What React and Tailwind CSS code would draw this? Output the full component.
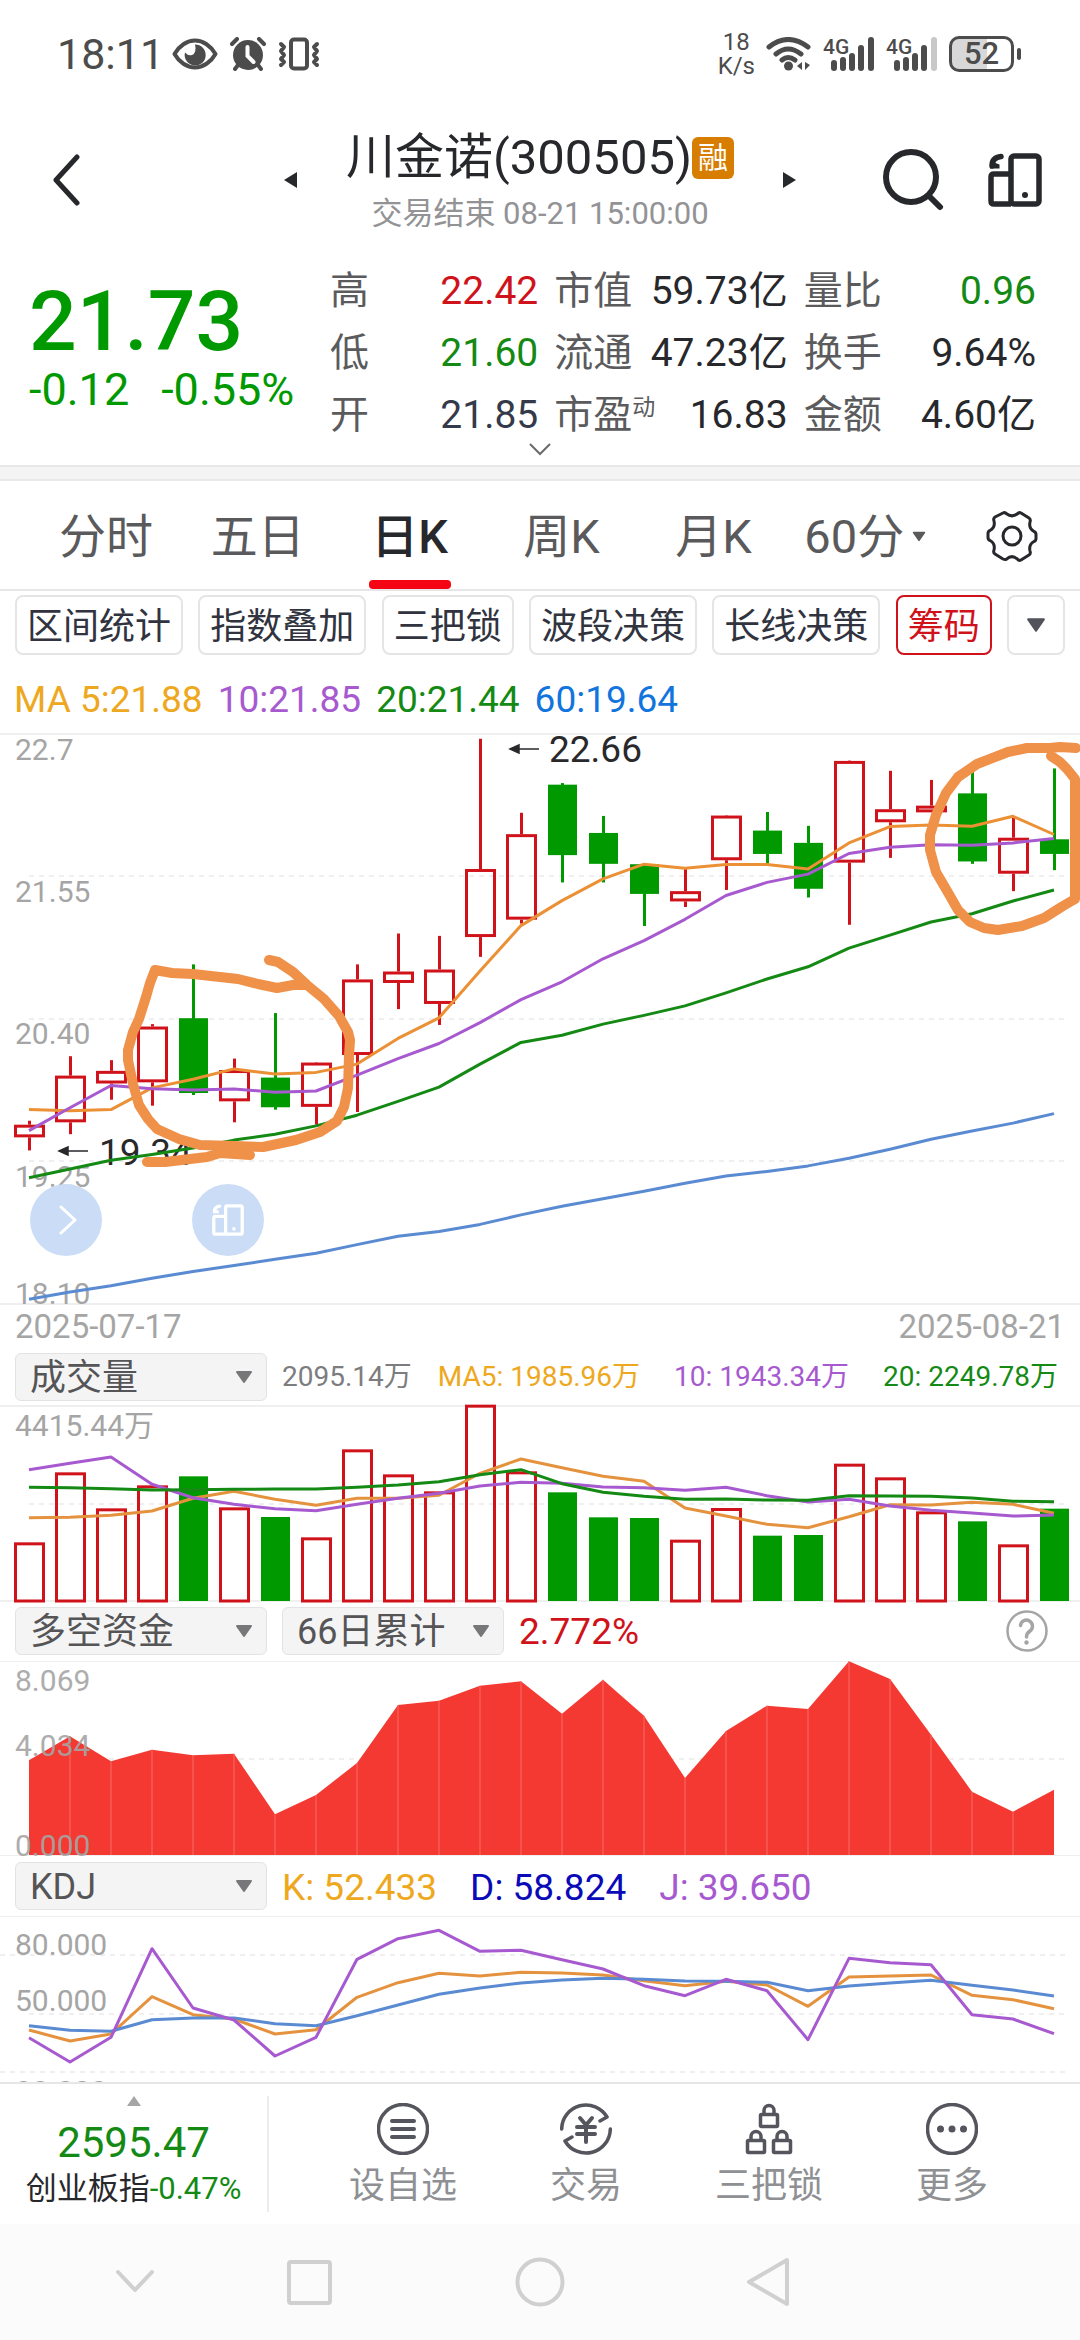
import React from "react";

const COUNT = 26;
const x = (i) => 29 + i * 41;

const RED = "#d0121b";
const GREEN = "#009900";

/* ---------- chart data, in plot units measured downwards ---------- */

// [direction, high, bodyTop, bodyBottom, low]
const CANDLES = [
  ["u", 1013, 1023, 1055, 1088], ["u", 850, 899, 1017, 1047], ["u", 860, 887, 919, 960],
  ["u", 769, 775, 916, 975], ["d", 618, 754, 943, 948], ["u", 856, 885, 964, 1017],
  ["d", 741, 904, 979, 985], ["u", 865, 866, 978, 1023], ["u", 618, 656, 847, 991],
  ["u", 540, 636, 665, 731], ["u", 546, 631, 718, 771], ["u", 48, 377, 549, 599],
  ["u", 235, 289, 505, 515], ["d", 160, 164, 342, 411], ["d", 243, 286, 364, 411],
  ["d", 364, 365, 440, 521], ["u", 373, 433, 459, 473], ["u", 241, 242, 355, 430],
  ["d", 233, 280, 339, 364], ["d", 268, 311, 427, 449], ["u", 103, 104, 361, 518],
  ["u", 129, 226, 259, 349], ["u", 152, 217, 234, 234], ["d", 131, 186, 358, 364],
  ["u", 248, 298, 389, 433], ["d", 123, 302, 339, 380],
];

const PRICE_LINES = [
  { color: "#5a8bd2", v: [1464, 1446, 1430, 1411, 1394, 1379, 1363, 1348, 1326, 1305, 1293, 1275, 1251, 1229, 1210, 1191, 1171, 1153, 1141, 1127, 1108, 1085, 1060, 1039, 1019, 995] },
  { color: "#148a14", v: [1157, 1135, 1113, 1098, 1082, 1062, 1047, 1026, 999, 964, 928, 870, 815, 797, 769, 747, 723, 690, 655, 624, 577, 544, 511, 490, 458, 430] },
  { color: "#eb9034", v: [985, 988, 985, 930, 908, 882, 895, 891, 870, 805, 753, 635, 520, 457, 402, 365, 375, 366, 366, 377, 311, 270, 266, 269, 244, 290] },
  { color: "#a75acf", v: [1038, 980, 924, 932, 935, 933, 941, 938, 898, 856, 818, 765, 707, 662, 604, 558, 504, 444, 411, 390, 338, 322, 316, 317, 311, 300] },
];

const VOLUMES = [637, 427, 535, 466, 439, 532, 561, 622, 358, 433, 484, 224, 424, 487, 562, 564, 629, 534, 617, 615, 401, 442, 544, 574, 643, 536];

const VOLUME_LINES = [
  { color: "#e5923e", v: [563, 562, 556, 543, 505, 484, 508, 526, 505, 505, 496, 430, 387, 413, 439, 454, 534, 558, 583, 593, 560, 524, 525, 517, 523, 550] },
  { color: "#a75acf", v: [419, 400, 381, 463, 503, 523, 536, 542, 523, 505, 490, 468, 457, 460, 471, 473, 481, 472, 497, 516, 508, 528, 541, 549, 558, 555] },
  { color: "#148a14", v: [472, 473, 476, 480, 479, 478, 477, 477, 472, 465, 455, 434, 419, 461, 487, 499, 508, 507, 510, 511, 497, 498, 499, 504, 514, 515] },
];

const FUNDS = [1290, 1218, 1293, 1258, 1275, 1270, 1452, 1394, 1298, 1124, 1111, 1066, 1053, 1150, 1048, 1156, 1343, 1202, 1126, 1136, 993, 1046, 1213, 1384, 1444, 1378];

const KDJ_LINES = [
  { color: "#e5923e", v: [570, 603, 582, 470, 524, 537, 582, 569, 472, 428, 400, 408, 397, 399, 405, 422, 437, 424, 435, 499, 411, 408, 405, 466, 479, 506] },
  { color: "#5a8bd2", v: [557, 571, 574, 539, 534, 534, 551, 557, 527, 495, 463, 444, 429, 420, 415, 418, 423, 424, 427, 452, 438, 429, 421, 436, 450, 468] },
  { color: "#a75acf", v: [593, 666, 592, 326, 504, 540, 648, 592, 358, 296, 271, 334, 331, 359, 387, 437, 467, 418, 452, 599, 355, 368, 374, 524, 537, 581] },
];

const MARK_LEFT = [[269, 226], [278, 228], [293, 238], [307, 251], [324, 265], [339, 282], [348, 298], [350, 306], [349, 322], [348, 354], [344, 373], [337, 387], [320, 398], [296, 406], [263, 413], [234, 412], [200, 411], [179, 405], [157, 395], [148, 385], [139, 371], [133, 350], [128, 326], [128, 316], [133, 298], [139, 285], [146, 263], [150, 249], [155, 236], [172, 239], [193, 240], [238, 245], [258, 250], [277, 254], [293, 251], [307, 251]];
const MARK_LEFT_TAIL = [[147, 428], [165, 428], [207, 423], [220, 419], [250, 421]];
const MARK_RIGHT = [[1076, 14], [1060, 13], [1050, 14], [1027, 14], [1008, 18], [977, 30], [958, 43], [946, 59], [936, 81], [930, 101], [930, 116], [936, 138], [950, 162], [958, 176], [970, 188], [984, 194], [998, 196], [1022, 192], [1044, 184], [1063, 172], [1075, 165], [1075, 45], [1067, 35], [1060, 28], [1051, 22]];

const priceY = (v) => ((v - 36) * 570) / 1440;
const volY = (v) => (v - 228) / 3;
const fundY = (v) => (v - 992) / 3;
const kdjY = (v) => (v - 228) / 3;

const linePoints = (values, y) => values.map((v, i) => `${x(i)},${y(v).toFixed(1)}`).join(" ");
const pts = (list) => list.map((p) => p.join(",")).join(" ");

function Grid({ y, from = 29 }) {
  return <line x1={from} x2="1068" y1={y} y2={y} stroke="#efefef" strokeWidth="2" strokeDasharray="5 5" />;
}

function Edge({ y }) {
  return <line x1="0" x2="1080" y1={y} y2={y} stroke="#efefef" strokeWidth="2" />;
}

function Lines({ lines, y }) {
  return lines.map((l, k) => (
    <polyline key={k} points={linePoints(l.v, y)} fill="none" stroke={l.color} strokeWidth="3" strokeLinejoin="round" />
  ));
}

function Axis({ y, children }) {
  return (
    <text x="15" y={y} fontSize="30" fill="#a5a5a5" dominantBaseline="central">
      {children}
    </text>
  );
}

function Mark({ points }) {
  return <polyline points={pts(points)} fill="none" stroke="#f0914a" strokeWidth="10" strokeLinejoin="round" strokeLinecap="round" />;
}

function PriceChart() {
  return (
    <svg viewBox="0 0 1080 570" className="block h-auto w-full overflow-visible" role="img" aria-label="日K">
      <Edge y={0} />
      <Grid y={142} />
      <Grid y={285} />
      <Grid y={427} />
      <Edge y={570} />
      {CANDLES.map(([dir, hi, top, bottom, lo], i) => {
        const cx = x(i) + 0.5;
        const t = priceY(top);
        const b = priceY(bottom);
        if (dir === "d") {
          return (
            <g key={i} fill={GREEN}>
              <rect x={cx - 1.5} y={priceY(hi)} width="3" height={priceY(lo) - priceY(hi)} />
              <rect x={cx - 14.5} y={t} width="29" height={b - t} />
            </g>
          );
        }
        return (
          <g key={i} fill="none" stroke={RED} strokeWidth="3">
            <line x1={cx} x2={cx} y1={priceY(hi)} y2={t} />
            <line x1={cx} x2={cx} y1={b} y2={priceY(lo)} />
            <rect x={cx - 14} y={t + 1.5} width="28" height={b - t - 3} />
          </g>
        );
      })}
      <g fontSize="37" fill="#29292c">
        <text x="99" y="418" dominantBaseline="central">19.34</text>
        <text x="549" y="15" dominantBaseline="central">22.66</text>
      </g>
      <g fill="#29292c" stroke="#29292c" strokeWidth="1.5">
        <path d="M60 417H88M59 417l9-4v8z" />
        <path d="M511 15H539M510 15l9-4v8z" />
      </g>
      <Axis y={15}>22.7</Axis>
      <Axis y={157}>21.55</Axis>
      <Axis y={299}>20.40</Axis>
      <Axis y={442}>19.25</Axis>
      <Axis y={559}>18.10</Axis>
      <Lines lines={PRICE_LINES} y={priceY} />
      <Mark points={MARK_LEFT} />
      <Mark points={MARK_LEFT_TAIL} />
      <Mark points={MARK_RIGHT} />
    </svg>
  );
}

function VolumeChart() {
  return (
    <svg viewBox="0 0 1080 195" className="block h-auto w-full overflow-visible" role="img" aria-label="成交量">
      <Edge y={0} />
      <Grid y={98} />
      <Edge y={195} />
      <Axis y={19}>4415.44万</Axis>
      {VOLUMES.map((v, i) => {
        const cx = x(i) + 0.5;
        const t = volY(v);
        return CANDLES[i][0] === "d" ? (
          <rect key={i} x={cx - 14.5} y={t} width="29" height={195 - t} fill={GREEN} />
        ) : (
          <rect key={i} x={cx - 14} y={t + 1.5} width="28" height={193.5 - t} fill="none" stroke={RED} strokeWidth="3" />
        );
      })}
      <Lines lines={VOLUME_LINES} y={volY} />
    </svg>
  );
}

function FundsChart() {
  return (
    <svg viewBox="0 0 1080 195" className="block h-auto w-full" role="img" aria-label="多空资金">
      <Edge y={0} />
      <Grid y={98} />
      <polygon points={`${x(0)},195 ${linePoints(FUNDS, fundY)} ${x(COUNT - 1)},195`} fill="#f43832" />
      {FUNDS.slice(1, -1).map((v, i) => (
        <line key={i} x1={x(i + 1)} x2={x(i + 1)} y1={fundY(v)} y2="195" stroke="#f86a64" strokeWidth="1" />
      ))}
      <Edge y={195} />
      <g opacity="0.9">
        <Axis y={19}>8.069</Axis>
        <Axis y={84}>4.034</Axis>
        <Axis y={184}>0.000</Axis>
      </g>
    </svg>
  );
}

function KdjChart() {
  return (
    <svg viewBox="0 0 1080 166" className="block h-auto w-full overflow-hidden" role="img" aria-label="KDJ">
      <Edge y={0} />
      <Grid y={39} from={0} />
      <Grid y={98} from={29} />
      <Grid y={156} from={0} />
      <Axis y={28}>80.000</Axis>
      <Axis y={84}>50.000</Axis>
      <Axis y={175}>20.000</Axis>
      <Lines lines={KDJ_LINES} y={kdjY} />
    </svg>
  );
}

/* ---------- icons ---------- */

function RotateIcon({ className }) {
  return (
    <svg viewBox="0 0 54 54" className={className} fill="none" stroke="currentColor" strokeWidth="5.500" strokeLinejoin="round" aria-hidden="true">
      <rect x="23" y="3" width="28" height="48" rx="3" />
      <path d="M23 21H6q-3 0-3 3v24q0 3 3 3h17" />
      <path d="M4 13q0-8.500 9-9.500" strokeLinecap="round" />
      <path d="M2 8v7.500h9.500v-4z" fill="currentColor" stroke="none" />
      <circle cx="37" cy="42" r="3" fill="currentColor" stroke="none" />
    </svg>
  );
}

function Triangle({ className }) {
  return (
    <svg viewBox="0 0 18 14" className={className} fill="currentColor" stroke="currentColor" strokeWidth="2" strokeLinejoin="round" aria-hidden="true">
      <path d="M2 2h14L9 12z" />
    </svg>
  );
}

function Signal({ weak }) {
  return (
    <svg viewBox="0 0 52 36" className="h-9 w-[52px] overflow-visible" fill="#4c4c4c" aria-hidden="true">
      <text x="0" y="18" fontSize="21" fontWeight="500">4G</text>
      <rect x="8" y="24" width="6" height="11" rx="3" />
      <rect x="17" y="21" width="6" height="14" rx="3" />
      <rect x="26" y="17" width="6" height="18" rx="3" />
      <rect x="35" y="9" width="6" height="26" rx="3" />
      <rect x="45" y="1" width="6" height="34" rx="3" fill={weak ? "#c8c8c8" : "#4c4c4c"} />
    </svg>
  );
}

function StatusBar() {
  return (
    <div className="flex h-[108px] items-center justify-between pr-[59px] pl-[57px] text-[#4c4c4c]">
      <div className="flex items-center gap-[12px]">
        <span className="-mr-1 text-[43px] leading-none">18:11</span>
        <svg viewBox="0 0 46 32" className="h-8 w-[46px]" fill="none" stroke="#4c4c4c" strokeWidth="4" aria-hidden="true">
          <path d="M2.500 16C7 8 15 2.500 23 2.500S39 8 43.500 16C39 24 31 29.500 23 29.500S7 24 2.500 16z" strokeLinejoin="round" />
          <path d="M23 6.500a10.500 10.500 0 1 1-10 8q3 3.500 7 2.500 5-2 3-10.500z" fill="#4c4c4c" stroke="none" />
        </svg>
        <svg viewBox="0 0 36 34" className="h-[34px] w-9" fill="none" stroke="#4c4c4c" strokeWidth="4" strokeLinecap="round" aria-hidden="true">
          <circle cx="18" cy="18" r="15" fill="#4c4c4c" stroke="none" />
          <path d="M2 7l5-5M34 7l-5-5M8 28l-3 4M28 28l3 4" />
          <path d="M17.500 10v9l6 6" stroke="#fff" />
        </svg>
        <svg viewBox="0 0 42 34" className="h-[34px] w-[42px]" fill="none" stroke="#4c4c4c" strokeWidth="4" strokeLinecap="round" strokeLinejoin="round" aria-hidden="true">
          <rect x="13" y="2.500" width="16" height="29" rx="3" />
          <path d="M3 7l3 3-3 4 3 4-3 4 3 3-3 3M39 7l-3 3 3 4-3 4 3 4-3 3 3 3" />
        </svg>
      </div>
      <div className="flex items-center gap-[11px]">
        <div className="text-center text-[24px] leading-[24px]">
          <div>18</div>
          <div>K/s</div>
        </div>
        <svg viewBox="0 0 46 34" className="h-[34px] w-[46px]" fill="none" stroke="#4c4c4c" strokeWidth="5" strokeLinecap="round" aria-hidden="true">
          <path d="M3 10Q22-5 42 10M10 17Q22 7 35 17M16 23Q22 18 29 23" />
          <circle cx="22.500" cy="29" r="4.500" fill="#4c4c4c" stroke="none" />
          <path d="M36 25v8l-5-4zM39 25v8l5-5z" fill="#4c4c4c" stroke="none" />
        </svg>
        <Signal />
        <Signal weak />
        <div className="flex items-center gap-[3px]">
          <div className="flex h-[36px] w-[65px] items-center justify-center rounded-[10px] border-[3px] border-[#4c4c4c] bg-linear-to-r from-[#d8d8d8] from-60% to-white to-60% text-[31px] leading-[30px] font-medium">
            52
          </div>
          <div className="h-3 w-1 rounded-full bg-[#4c4c4c]" />
        </div>
      </div>
    </div>
  );
}

function Header() {
  return (
    <header className="grid h-[144px] grid-cols-[1fr_512px_1fr] items-center text-[#27282b]">
      <button aria-label="返回" className="w-[80px] pl-[52px]">
        <svg viewBox="0 0 28 52" className="h-[52px] w-7" fill="none" stroke="currentColor" strokeWidth="5" strokeLinecap="round" strokeLinejoin="round">
          <path d="M25 3L4 26l21 23" />
        </svg>
      </button>
      <div className="flex items-center justify-between">
        <button aria-label="上一只">
          <svg viewBox="0 0 14 16" className="h-4 w-[14px]" fill="currentColor"><path d="M0 8L13 0v16z" /></svg>
        </button>
        <div className="pt-1 text-center">
          <h1 className="flex h-[60px] items-center text-[49px] leading-[60px] whitespace-nowrap">
            <span>川金诺(300505)</span>
            <span className="flex size-[42px] items-center justify-center rounded-md bg-[#d67d02] text-[30px] leading-none text-white">融</span>
          </h1>
          <p className="mt-1 text-[31px] leading-[44px] whitespace-nowrap text-[#939396]">交易结束 08-21 15:00:00</p>
        </div>
        <button aria-label="下一只">
          <svg viewBox="0 0 14 16" className="h-4 w-[14px]" fill="currentColor"><path d="M14 8L1 0v16z" /></svg>
        </button>
      </div>
      <div className="flex items-center justify-end gap-[44px] pr-[38px]">
        <button aria-label="搜索">
          <svg viewBox="0 0 62 62" className="size-[62px]" fill="none" stroke="currentColor" strokeWidth="6" strokeLinecap="round">
            <circle cx="29" cy="28" r="25" />
            <path d="M47 47l11 11" />
          </svg>
        </button>
        <button aria-label="横屏"><RotateIcon className="size-[54px]" /></button>
      </div>
    </header>
  );
}

const STATS = [
  ["高", "22.42", "text-[#d0121b]"], ["市值", "59.73亿", "text-[#27282b]"], ["量比", "0.96", "text-[#148a14]"],
  ["低", "21.60", "text-[#148a14]"], ["流通", "47.23亿", "text-[#27282b]"], ["换手", "9.64%", "text-[#27282b]"],
  ["开", "21.85", "text-[#343a4a]"], ["市盈", "16.83", "text-[#27282b]", "动"], ["金额", "4.60亿", "text-[#27282b]"],
];

function Quote() {
  return (
    <section className="h-[213px] pt-[8px]">
      <div className="flex pr-[44px] pl-[29px]">
        <div className="w-[301px] shrink-0 pt-5 text-[#009900]">
          <div className="text-[84px] leading-[84px] font-medium">21.73</div>
          <div className="flex gap-[32px] text-[45px] leading-[52px]">
            <span>-0.12</span>
            <span>-0.55%</span>
          </div>
        </div>
        <dl className="grid flex-1 grid-cols-[208fr_233fr_232fr] gap-x-[16px]">
          {STATS.map(([label, value, color, sup]) => (
            <div key={label} className="flex h-[62px] items-center justify-between text-[39px] leading-none whitespace-nowrap">
              <dt className="flex items-start text-[#5b5b5d]">
                {label}
                {sup && <span className="text-[23px] leading-none">{sup}</span>}
              </dt>
              <dd className={color}>{value}</dd>
            </div>
          ))}
        </dl>
      </div>
      <button aria-label="展开" className="mx-auto -mt-1 block w-6">
        <svg viewBox="0 0 24 14" className="h-[14px] w-6" fill="none" stroke="#6b6b6e" strokeWidth="2"><path d="M2 2l10 10L22 2" /></svg>
      </button>
    </section>
  );
}

const TABS = ["分时", "五日", "日K", "周K", "月K"];

function PeriodTabs() {
  return (
    <nav className="grid h-[110px] grid-cols-[repeat(6,151fr)_136fr] border-b-2 border-[#e6e6e8] pr-[2px] pl-[30px] text-[47px] text-[#5a5a5c]">
      {TABS.map((t) => (
        <button key={t} className={t === "日K" ? "flex flex-col items-center justify-between font-medium text-[#27282b]" : "flex flex-col items-center justify-between"}>
          <span className="flex h-[99px] items-center pt-[12px] leading-none">{t}</span>
          {t === "日K" && <span className="h-[9px] w-[82px] shrink-0 rounded bg-[#f50514]" />}
        </button>
      ))}
      <button className="flex h-[99px] items-center justify-center gap-2 pt-[12px] leading-none whitespace-nowrap">
        60分
        <Triangle className="h-[11px] w-[14px] shrink-0" />
      </button>
      <button aria-label="设置" className="flex h-[102px] items-center justify-end pt-2 pr-[40px]">
        <svg viewBox="0 0 52 52" className="size-[52px]" fill="none" stroke="#27282b" strokeWidth="3" strokeLinejoin="round">
          <path d="M17 3q2-1 3.500.8Q26 8 31.500 3.800 33 2 35 3l8 5q2 1.500 1 4-1.500 6.500 4 9.500 2 .8 2 3v4q0 2.200-2 3-5.500 3-4 9.500 1 2.500-1 4l-8 5q-2 1-3.500-.8Q26 44 20.500 49.200 19 50 17 49l-8-5q-2-1.500-1-4 1.500-6.500-4-9.500-2-.8-2-3v-4q0-2.200 2-3 5.500-3 4-9.500-1-2.500 1-4z" />
          <circle cx="26" cy="26" r="9" />
        </svg>
      </button>
    </nav>
  );
}

const CHIPS = ["区间统计", "指数叠加", "三把锁", "波段决策", "长线决策"];

function Chips() {
  return (
    <div className="flex justify-between px-[15px] pt-1 text-[36px] leading-none whitespace-nowrap text-[#31343f]">
      {CHIPS.map((c) => (
        <button key={c} className="h-[60px] rounded-lg border-2 border-[#e5e5e7] px-[10px] pt-1">{c}</button>
      ))}
      <button className="h-[60px] rounded-lg border-2 border-[#d0121b] px-[10px] pt-1 text-[#d0121b]">筹码</button>
      <button aria-label="更多指标" className="flex h-[60px] w-[58px] items-center justify-center rounded-lg border-2 border-[#e5e5e7] text-[#52535a]">
        <Triangle className="h-4 w-5" />
      </button>
    </div>
  );
}

function Picker({ label, options, narrow }) {
  return (
    <label className={narrow ? "relative h-[48px] w-[222px] shrink-0" : "relative h-[48px] w-[252px] shrink-0"}>
      <span className="sr-only">{label}</span>
      <select className="h-full w-full appearance-none overflow-visible rounded-md border border-[#e3e3e3] bg-[#f4f4f4] pt-[2px] pl-[14px] text-[36px] leading-[44px] text-[#555557]">
        {options.map((o) => <option key={o}>{o}</option>)}
      </select>
      <Triangle className="pointer-events-none absolute top-[17px] right-[14px] h-[14px] w-[18px] text-[#77777a]" />
    </label>
  );
}

function FloatingButtons() {
  return (
    <div className="absolute top-[450px] left-[30px] flex gap-[90px] text-white">
      <button aria-label="下一页" className="flex size-[72px] items-center justify-center rounded-full bg-[#cbddf6]">
        <svg viewBox="0 0 20 30" className="ml-1 h-[30px] w-5" fill="none" stroke="currentColor" strokeWidth="3" strokeLinecap="round" strokeLinejoin="round"><path d="M3 2l14 13L3 28" /></svg>
      </button>
      <button aria-label="横屏查看" className="flex size-[72px] items-center justify-center rounded-full bg-[#cbddf6]">
        <RotateIcon className="size-8" />
      </button>
    </div>
  );
}

function Lock({ x: lx, y: ly }) {
  return (
    <g transform={`translate(${lx} ${ly})`}>
      <path d="M5 10V6.500a5 5 0 0 1 10 0V10" />
      <rect x="1.500" y="10.500" width="17" height="12" rx="1" />
    </g>
  );
}

const ACTIONS = [
  {
    label: "设自选",
    icon: <><circle cx="26" cy="26" r="24.500" /><path d="M15 18h22M15 26h22M15 34h22" strokeWidth="4" /></>,
  },
  {
    label: "交易",
    icon: (
      <>
        <path d="M1.700 26A24.300 24.300 0 0 1 47 14l-7 4M50.300 26A24.300 24.300 0 0 1 5 38l7-4" />
        <path d="M20 15l6 7 6-7M17 24h18M17 31h18M26 22v17" strokeWidth="4" />
      </>
    ),
  },
  {
    label: "三把锁",
    icon: <><Lock x="16" y="1" /><Lock x="3" y="27" /><Lock x="29" y="27" /></>,
  },
  {
    label: "更多",
    icon: (
      <>
        <circle cx="26" cy="26" r="24.500" />
        <g fill="#54555d" stroke="none"><circle cx="14.500" cy="26" r="3.500" /><circle cx="26" cy="26" r="3.500" /><circle cx="37.500" cy="26" r="3.500" /></g>
      </>
    ),
  },
];

function BottomBar() {
  return (
    <footer className="flex h-[142px] border-t-2 border-[#e6e6e8] bg-white">
      <button className="my-[12px] flex w-[269px] shrink-0 flex-col items-center border-r-2 border-[#ececee] whitespace-nowrap">
        <svg viewBox="0 0 14 10" className="h-[10px] w-[14px]" fill="#a6a6a8" aria-hidden="true"><path d="M7 0l7 10H0z" /></svg>
        <span className="mt-[13px] text-[42px] leading-[48px] text-[#148a14]">2595.47</span>
        <span className="mt-[2px] text-[31px] leading-[40px] text-[#27282b]">创业板指<span className="text-[#148a14]">-0.47%</span></span>
      </button>
      <div className="flex flex-1 justify-between pr-[92px] pl-[80px] text-[#8f9094]">
        {ACTIONS.map((a) => (
          <button key={a.label} className="flex flex-col items-center pt-[19px]">
            <svg viewBox="0 0 52 52" className="size-[52px]" fill="none" stroke="#54555d" strokeWidth="3.500" strokeLinecap="round" strokeLinejoin="round" aria-hidden="true">{a.icon}</svg>
            <span className="mt-[9px] text-[36px] leading-[44px]">{a.label}</span>
          </button>
        ))}
      </div>
    </footer>
  );
}

function SystemNav() {
  return (
    <div className="grid h-[116px] grid-cols-[135fr_174fr_231fr_229fr_311fr] items-center bg-[#fbfbfb]">
      {[
        ["收起", <path d="M9 16l17 18 17-18" />],
        ["最近任务", <rect x="6" y="6" width="41" height="41" rx="2" />],
        ["主屏幕", <circle cx="26" cy="26" r="22.500" />],
        ["返回", <path d="M44 4v44L6 26z" />],
      ].map(([name, shape]) => (
        <button key={name} aria-label={name} className="-mr-[26px] justify-self-end">
          <svg viewBox="0 0 52 52" className="size-[52px]" fill="none" stroke="#d0d0d0" strokeWidth="4" strokeLinejoin="round" strokeLinecap="round">{shape}</svg>
        </button>
      ))}
    </div>
  );
}

export default function App() {
  return (
    <main className="min-h-screen w-full overflow-hidden bg-white font-['Roboto','Noto_Sans_CJK_SC',sans-serif]">
      <StatusBar />
      <Header />
      <Quote />
      <div className="h-[16px] border-y-2 border-[#e8e8e8] bg-[#f4f4f4]" />
      <PeriodTabs />
      <Chips />
      <div className="mt-[14px] mb-[5px] flex h-[60px] items-center gap-[15px] px-[14px] text-[37px] leading-none">
        <span className="text-[#eea820]">MA 5:21.88</span>
        <span className="text-[#a75acf]">10:21.85</span>
        <span className="text-[#148a14]">20:21.44</span>
        <span className="text-[#1274dd]">60:19.64</span>
      </div>
      <div className="relative">
        <PriceChart />
        <FloatingButtons />
      </div>
      <div className="flex h-[44px] items-center justify-between px-[15px] text-[33px] leading-none text-[#a5a5a5]">
        <span>2025-07-17</span>
        <span>2025-08-21</span>
      </div>
      <div className="flex h-[58px] items-center px-[15px] text-[28px] leading-none whitespace-nowrap">
        <Picker label="副图指标一" options={["成交量"]} />
        <div className="ml-[15px] flex flex-1 gap-[34px]">
          <span className="-mr-2 text-[#7d7d80]">2095.14万</span>
          <span className="text-[#eea820]">MA5: 1985.96万</span>
          <span className="text-[#a75acf]">10: 1943.34万</span>
          <span className="text-[#148a14]">20: 2249.78万</span>
        </div>
      </div>
      <VolumeChart />
      <div className="flex h-[60px] items-center gap-[15px] px-[15px] text-[37px] leading-none">
        <Picker label="副图指标二" options={["多空资金"]} />
        <Picker label="累计周期" options={["66日累计"]} narrow />
        <span className="text-[#d0121b]">2.772%</span>
        <button aria-label="帮助" className="mr-[17px] ml-auto">
          <svg viewBox="0 0 42 42" className="size-[42px]" fill="none" stroke="#a5a5a7" strokeWidth="2.500" strokeLinecap="round">
            <circle cx="21" cy="21" r="19.500" />
            <path d="M14.500 15.500a6 6 0 1 1 9.500 5.500q-3.500 2.500-3.500 6" strokeWidth="3.500" />
            <circle cx="20.500" cy="32.500" r="2.200" fill="#a5a5a7" stroke="none" />
          </svg>
        </button>
      </div>
      <FundsChart />
      <div className="flex h-[60px] items-center px-[15px] text-[37px] leading-none">
        <Picker label="副图指标三" options={["KDJ"]} />
        <div className="ml-[15px] flex gap-[33px] pt-[2px]">
          <span className="text-[#eea820]">K: 52.433</span>
          <span className="text-[#0a0ab8]">D: 58.824</span>
          <span className="text-[#a75acf]">J: 39.650</span>
        </div>
      </div>
      <KdjChart />
      <BottomBar />
      <SystemNav />
    </main>
  );
}
